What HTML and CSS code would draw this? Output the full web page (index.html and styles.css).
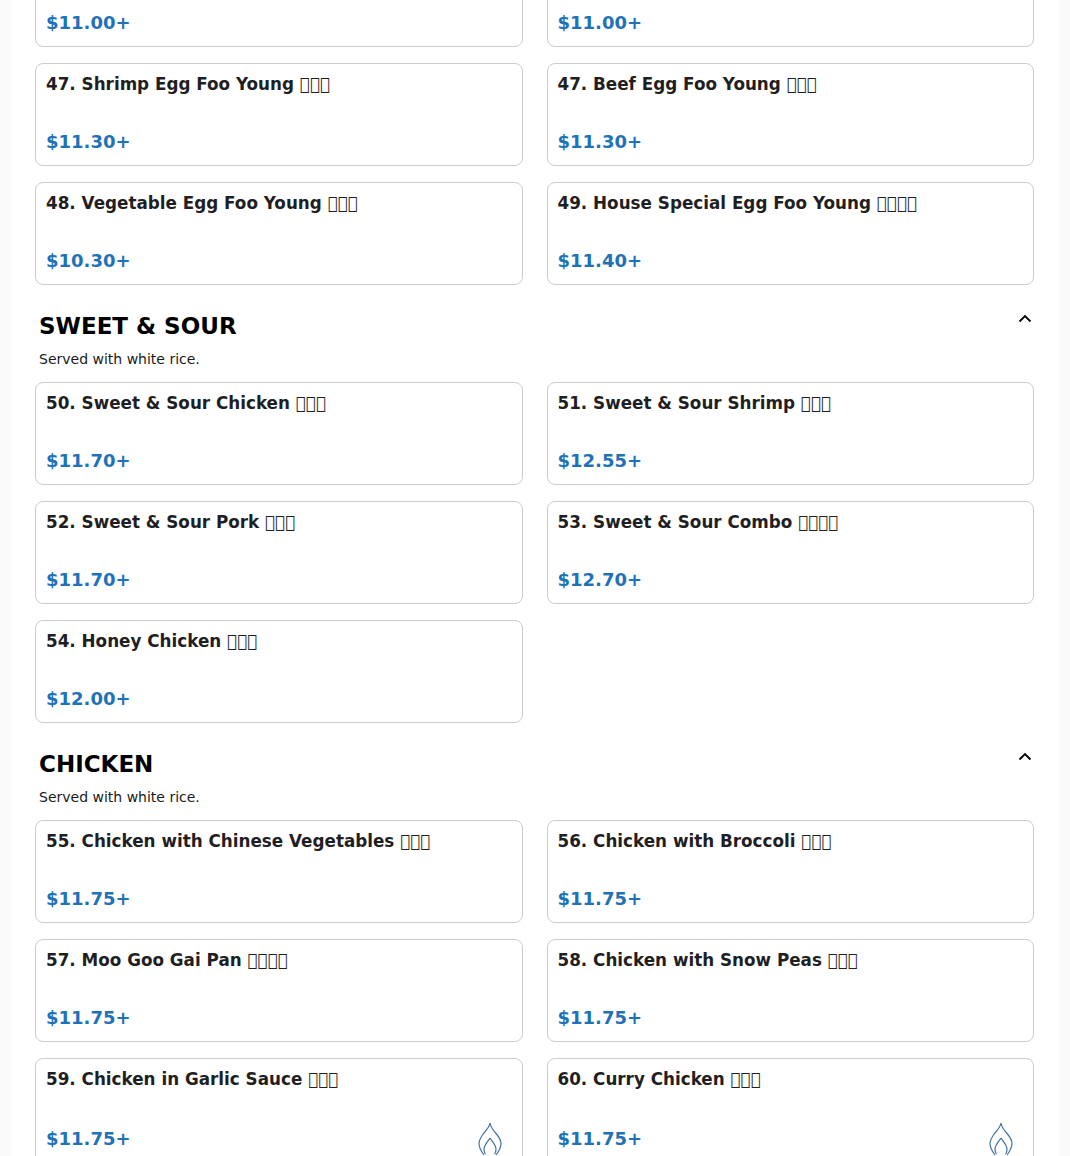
FILE: index.html
```html
<!DOCTYPE html>
<html lang="en">
    <head>
        <meta charset="UTF-8">
        <meta name="viewport" content="width=device-width, initial-scale=1.0">
        <title>Menu</title>
        <link rel="stylesheet" href="styles.css">
    </head>
    <body>
        <div class="container">
            <div class="items first-items">
                <div class="item"><div class="name blank"></div><div class="bottom"><span class="price">$11.00+</span></div></div>
                <div class="item"><div class="name blank"></div><div class="bottom"><span class="price">$11.00+</span></div></div>
                <div class="item"><div class="name">47. Shrimp Egg Foo Young &#xE000;&#xE000;&#xE000;</div><div class="bottom"><span class="price">$11.30+</span></div></div>
                <div class="item"><div class="name">47. Beef Egg Foo Young &#xE000;&#xE000;&#xE000;</div><div class="bottom"><span class="price">$11.30+</span></div></div>
                <div class="item"><div class="name">48. Vegetable Egg Foo Young &#xE000;&#xE000;&#xE000;</div><div class="bottom"><span class="price">$10.30+</span></div></div>
                <div class="item"><div class="name">49. House Special Egg Foo Young &#xE000;&#xE000;&#xE000;&#xE000;</div><div class="bottom"><span class="price">$11.40+</span></div></div>
            </div>

            <div class="section-head">
                <h2>SWEET &amp; SOUR</h2>
                <svg class="chevron" viewBox="0 0 14 9"><path d="M1.500 7.500 7 2l5.500 5.500"/></svg>
            </div>
            <p class="note">Served with white rice.</p>
            <div class="items">
                <div class="item"><div class="name">50. Sweet &amp; Sour Chicken &#xE000;&#xE000;&#xE000;</div><div class="bottom"><span class="price">$11.70+</span></div></div>
                <div class="item"><div class="name">51. Sweet &amp; Sour Shrimp &#xE000;&#xE000;&#xE000;</div><div class="bottom"><span class="price">$12.55+</span></div></div>
                <div class="item"><div class="name">52. Sweet &amp; Sour Pork &#xE000;&#xE000;&#xE000;</div><div class="bottom"><span class="price">$11.70+</span></div></div>
                <div class="item"><div class="name">53. Sweet &amp; Sour Combo &#xE000;&#xE000;&#xE000;&#xE000;</div><div class="bottom"><span class="price">$12.70+</span></div></div>
                <div class="item"><div class="name">54. Honey Chicken &#xE000;&#xE000;&#xE000;</div><div class="bottom"><span class="price">$12.00+</span></div></div>
            </div>

            <div class="section-head">
                <h2>CHICKEN</h2>
                <svg class="chevron" viewBox="0 0 14 9"><path d="M1.500 7.500 7 2l5.500 5.500"/></svg>
            </div>
            <p class="note">Served with white rice.</p>
            <div class="items">
                <div class="item"><div class="name">55. Chicken with Chinese Vegetables &#xE000;&#xE000;&#xE000;</div><div class="bottom"><span class="price">$11.75+</span></div></div>
                <div class="item"><div class="name">56. Chicken with Broccoli &#xE000;&#xE000;&#xE000;</div><div class="bottom"><span class="price">$11.75+</span></div></div>
                <div class="item"><div class="name">57. Moo Goo Gai Pan &#xE000;&#xE000;&#xE000;&#xE000;</div><div class="bottom"><span class="price">$11.75+</span></div></div>
                <div class="item"><div class="name">58. Chicken with Snow Peas &#xE000;&#xE000;&#xE000;</div><div class="bottom"><span class="price">$11.75+</span></div></div>
                <div class="item">
                    <div class="name">59. Chicken in Garlic Sauce &#xE000;&#xE000;&#xE000;</div>
                    <div class="bottom">
                        <span class="price">$11.75+</span>
                        <svg class="flame" viewBox="0 0 24 34"><path d="M12 1c-.5 4-3.500 7-6.500 10.500C3 15 1 18 1 21.500 1 25 3 29 6 33M12 1c.5 4 3 7 6 10.500 3 3.500 5 6.500 5 10 0 3.500-2 7.500-5 11.500"/><path d="M12 16c-2 3-6 7-6 11 0 2 .5 4 1.500 5M12 16c2 3 6 7 6 11 0 2-.5 4-1.500 5"/></svg>
                    </div>
                </div>
                <div class="item">
                    <div class="name">60. Curry Chicken &#xE000;&#xE000;&#xE000;</div>
                    <div class="bottom">
                        <span class="price">$11.75+</span>
                        <svg class="flame" viewBox="0 0 24 34"><path d="M12 1c-.5 4-3.500 7-6.500 10.500C3 15 1 18 1 21.500 1 25 3 29 6 33M12 1c.5 4 3 7 6 10.500 3 3.500 5 6.500 5 10 0 3.500-2 7.500-5 11.500"/><path d="M12 16c-2 3-6 7-6 11 0 2 .5 4 1.500 5M12 16c2 3 6 7 6 11 0 2-.5 4-1.500 5"/></svg>
                    </div>
                </div>
            </div>
        </div>
    </body>
</html>
```

FILE: styles.css
```css
html, body {
    height: 1156px;
    overflow: hidden;
}
body {
    margin: 0;
    font-family: "DejaVu Sans", sans-serif;
    background-color: #fafafa;
}
.container {
    width: 999px;
    margin: -56px 0 0 11px;
    padding: 0 25px 0 24px;
    background-color: #ffffff;
}
.items {
    display: grid;
    grid-template-columns: 1fr 1fr;
    gap: 16px 24px;
}
.item {
    box-sizing: border-box;
    min-height: 103px;
    padding: 10px 10px 13px;
    border: 1px solid #cccccc;
    border-radius: 8px;
}
.name {
    margin-bottom: 37px;
    font-size: 16.8px;
    font-weight: bold;
    color: #1f1f23;
}
.name.blank {
    height: 20px;
}
.bottom {
    display: flex;
    justify-content: space-between;
    align-items: center;
    padding-right: 10px;
}
.price {
    font-size: 18px;
    font-weight: bold;
    color: #1f72b8;
}
.flame {
    width: 24px;
    height: 34px;
    margin: -4px 0 -5px;
    fill: none;
    stroke: #3f72a6;
    stroke-width: 1.2;
}
.section-head {
    display: flex;
    justify-content: space-between;
    align-items: flex-start;
    margin-top: 28px;
    padding: 0 2px 0 4px;
}
h2 {
    margin: 0;
    font-size: 23px;
    font-weight: bold;
    color: #000000;
}
.chevron {
    width: 14px;
    height: 9px;
    margin-top: 1px;
    fill: none;
    stroke: #000000;
    stroke-width: 1.8;
}
.note {
    margin: 12px 0 15px;
    padding-left: 4px;
    font-size: 14px;
    color: #1a1a1a;
}
```
